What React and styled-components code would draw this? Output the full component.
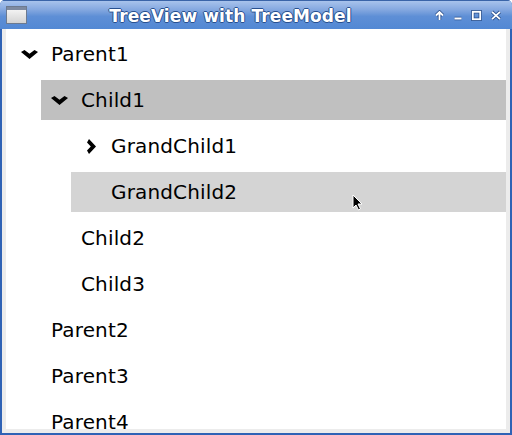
import React from 'react';
import styled, { createGlobalStyle } from 'styled-components';

const GlobalStyle = createGlobalStyle`
  html, body {
    margin: 0;
    padding: 0;
    background: #ffffff;
  }
`;

const Window = styled.div`
  position: relative;
  width: 512px;
  height: 435px;
  box-sizing: border-box;
  display: flex;
  flex-direction: column;
  background: #2f62b5;
  border-radius: 5px 5px 0 0;
  overflow: hidden;
  font-family: 'DejaVu Sans', 'Liberation Sans', sans-serif;
`;

const TitleBar = styled.div`
  height: 29px;
  box-sizing: border-box;
  flex: none;
  display: flex;
  align-items: center;
  padding: 0 10px 0 6px;
  border-top: 1px solid #3a64a8;
  background: linear-gradient(
    to bottom,
    #a8c3ec 0%,
    #86a9e0 30%,
    #5e8fd6 55%,
    #5288d4 100%
  );
`;

const Title = styled.div`
  flex: 1;
  text-align: center;
  color: #ffffff;
  font-weight: bold;
  font-size: 17px;
  letter-spacing: 0.1px;
  text-shadow: 1px 0 0 #28508f, -1px 0 0 #28508f, 0 1px 0 #28508f,
    0 -1px 0 #28508f;
  padding-top: 1px;
`;

const Buttons = styled.div`
  display: flex;
  align-items: center;
  gap: 8px;
  padding-top: 1px;
`;

const Frame = styled.div`
  flex: 1;
  display: flex;
  margin: 0 2px 2px 2px;
  padding: 0 4px 4px 4px;
  background: #ececec;
  min-height: 0;
`;

const Content = styled.div`
  flex: 1;
  background: #ffffff;
  overflow: hidden;
  padding: 5px 0 0 5px;
  display: flex;
  flex-direction: column;
  gap: 6px;
`;

const Row = styled.div`
  flex: none;
  height: 40px;
  display: flex;
  align-items: center;
  margin-left: ${(props) => props.depth * 30}px;
  background: ${(props) =>
    props.selected ? '#c0c0c0' : props.hovered ? '#d4d4d4' : 'transparent'};
`;

const Toggle = styled.div`
  width: 40px;
  flex: none;
  display: flex;
  justify-content: center;
  align-items: center;
  padding-right: ${(props) => (props.open ? 4 : 0)}px;
  box-sizing: border-box;
`;

const Label = styled.span`
  font-size: 20px;
  letter-spacing: 0.15px;
  color: #000000;
  white-space: nowrap;
`;

const Cursor = styled.svg`
  position: absolute;
  left: 352px;
  top: 194px;
`;

const tree = [
  { label: 'Parent1', depth: 0, toggle: 'open' },
  { label: 'Child1', depth: 1, toggle: 'open', selected: true },
  { label: 'GrandChild1', depth: 2, toggle: 'closed' },
  { label: 'GrandChild2', depth: 2, hovered: true },
  { label: 'Child2', depth: 1 },
  { label: 'Child3', depth: 1 },
  { label: 'Parent2', depth: 0 },
  { label: 'Parent3', depth: 0 },
  { label: 'Parent4', depth: 0 },
];

function Chevron({ open }) {
  if (open) {
    return (
      <svg width="17" height="9" viewBox="0 0 17 9">
        <path d="M0 2 L3.5 0 L8.5 3.8 L13.5 0 L17 2 L8.5 9 Z" fill="#000" />
      </svg>
    );
  }
  return (
    <svg width="9" height="15" viewBox="0 0 9 15">
      <path d="M2 0 L9 7.5 L2 15 L0 11.5 L3.8 7.5 L0 3.5 Z" fill="#000" />
    </svg>
  );
}

function WindowIcon() {
  return (
    <svg width="21" height="18" viewBox="0 0 21 18">
      <defs>
        <linearGradient id="wi" x1="0" y1="0" x2="0" y2="1">
          <stop offset="0" stopColor="#fbfbfb" />
          <stop offset="1" stopColor="#d2d2d2" />
        </linearGradient>
      </defs>
      <rect x="0.5" y="0.5" width="20" height="17" fill="url(#wi)" stroke="#6c7a90" />
      <rect x="1" y="1" width="19" height="3" fill="#7e8aa0" />
    </svg>
  );
}

function TitleButtons() {
  const outline = { stroke: '#2a4f8c', strokeWidth: 3.4, fill: 'none' };
  const white = { stroke: '#ffffff', strokeWidth: 1.8, fill: 'none' };
  return (
    <Buttons>
      <svg width="11" height="11" viewBox="0 0 11 11">
        <path d="M5.5 10 V2 M2 5.5 L5.5 2 L9 5.5" {...outline} />
        <path d="M5.5 10 V2 M2 5.5 L5.5 2 L9 5.5" {...white} />
      </svg>
      <svg width="10" height="11" viewBox="0 0 10 11">
        <path d="M1.5 8.5 H8.5" {...outline} />
        <path d="M1.5 8.5 H8.5" {...white} />
      </svg>
      <svg width="11" height="11" viewBox="0 0 11 11">
        <rect x="1.8" y="1.8" width="7.4" height="7.4" {...outline} />
        <rect x="1.8" y="1.8" width="7.4" height="7.4" {...white} />
      </svg>
      <svg width="12" height="11" viewBox="0 0 12 11">
        <path d="M2 1.8 L10 9.2 M10 1.8 L2 9.2" {...outline} />
        <path d="M2 1.8 L10 9.2 M10 1.8 L2 9.2" {...white} />
      </svg>
    </Buttons>
  );
}

export default function App() {
  return (
    <>
      <GlobalStyle />
      <Window>
        <TitleBar>
          <WindowIcon />
          <Title>TreeView with TreeModel</Title>
          <TitleButtons />
        </TitleBar>
        <Frame>
          <Content>
            {tree.map((node) => (
              <Row
                key={node.label}
                depth={node.depth}
                selected={node.selected}
                hovered={node.hovered}
              >
                <Toggle open={node.toggle === 'open'}>
                  {node.toggle && <Chevron open={node.toggle === 'open'} />}
                </Toggle>
                <Label>{node.label}</Label>
              </Row>
            ))}
          </Content>
        </Frame>
        <Cursor width="12" height="18" viewBox="0 0 12 18">
          <path
            d="M1 1 L1 14 L4 11 L6.5 16 L8.5 15 L6 10 L10 10 Z"
            fill="#000"
            stroke="#fff"
            strokeWidth="1"
          />
        </Cursor>
      </Window>
    </>
  );
}
